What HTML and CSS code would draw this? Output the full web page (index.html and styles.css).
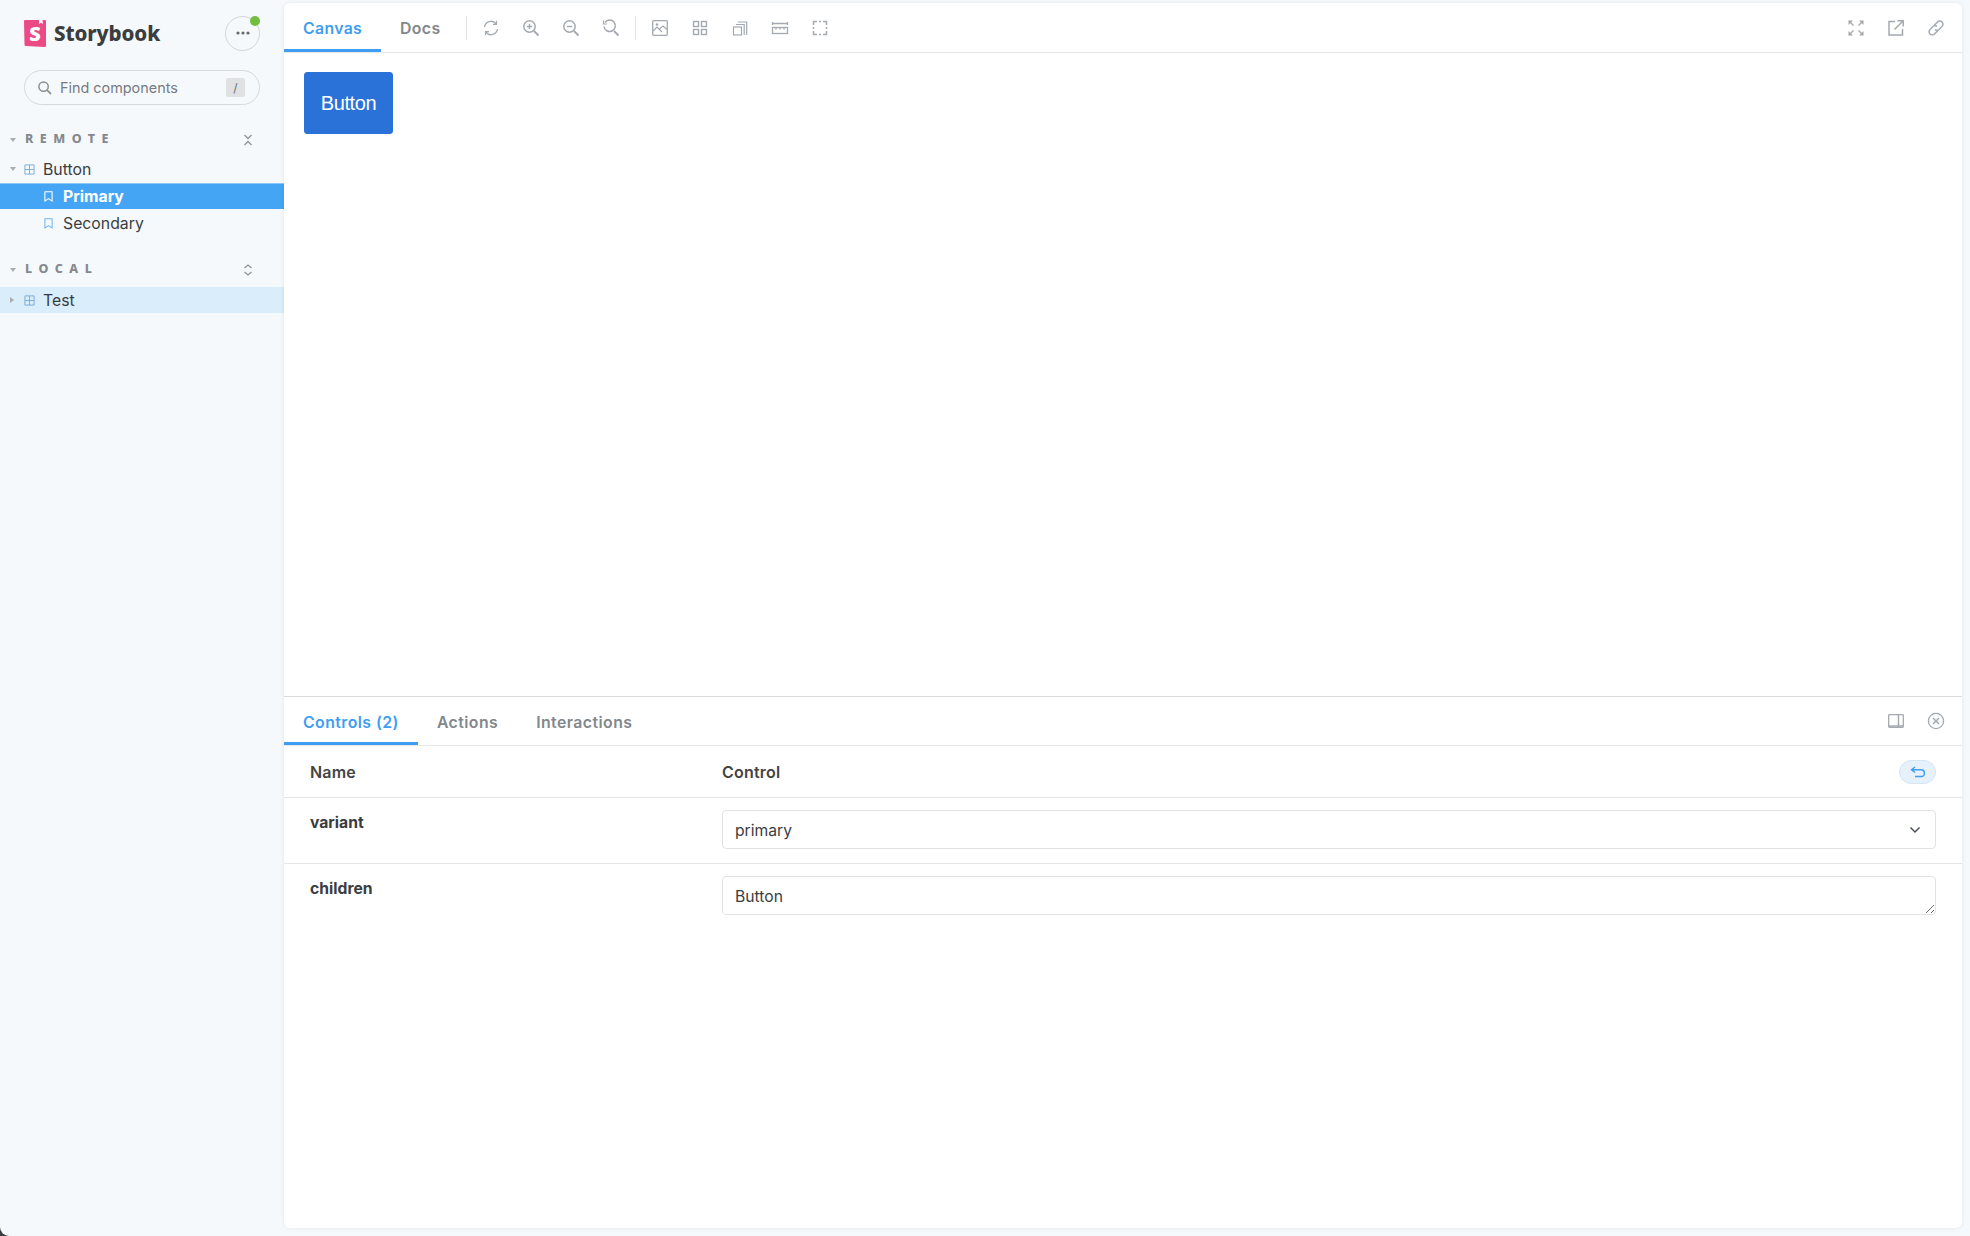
FILE: index.html
```html
<!DOCTYPE html>
<html lang="en">
<head>
<meta charset="utf-8">
<title>Storybook</title>
<link rel="stylesheet" href="styles.css">
</head>
<body>
<svg class="sprite" width="0" height="0" aria-hidden="true">
  <symbol id="grid" viewBox="0 0 12 12"><path d="M1 1h10v10H1zM6 1v10M1 6h10" fill="none" stroke="currentColor" stroke-width="1"/></symbol>
  <symbol id="mark" viewBox="0 0 10 12"><path d="M1 .8h8v10.400L5 8.400l-4 2.800z" fill="none" stroke="currentColor" stroke-width="1.200" stroke-linejoin="round"/></symbol>
</svg>
<div class="shell">
  <aside class="sidebar">
    <header class="brand">
      <div class="logo">
        <svg class="logo-mark" viewBox="0 0 22 27"><path d="M1 0h20a1 1 0 0 1 1 1v25a1 1 0 0 1-1 1L2 26a1.500 1.500 0 0 1-1.500-1.500L0 1a1 1 0 0 1 1-1z" fill="#ec4a84"/><path d="M15 0h3.500l.3 4-1.900-1.300L15 4z" fill="#fff"/><text x="11" y="21" text-anchor="middle" class="logo-s">S</text></svg>
        <span class="logo-text">Storybook</span>
      </div>
      <button class="menu-btn"><svg width="14" height="4" viewBox="0 0 14 4"><circle cx="2" cy="2" r="1.600"/><circle cx="7" cy="2" r="1.600"/><circle cx="12" cy="2" r="1.600"/></svg><span class="dot"></span></button>
    </header>
    <div class="search">
      <svg class="search-icon" viewBox="0 0 16 16"><circle cx="7" cy="7" r="5" fill="none" stroke="currentColor" stroke-width="1.600"/><path d="M11 11l3.500 3.500" stroke="currentColor" stroke-width="1.800" stroke-linecap="round"/></svg>
      <span class="search-label">Find components</span>
      <kbd class="key">/</kbd>
    </div>
    <div class="section-head first">
      <span class="caret-down small"></span><span class="section-title">REMOTE</span>
      <svg class="section-icon" viewBox="0 0 10 12"><path d="M1.500 1L5 4.500 8.500 1M1.500 11L5 7.500l3.500 3.500" fill="none" stroke="currentColor" stroke-width="1.300"/></svg>
    </div>
    <div class="row">
      <span class="caret-down"></span><svg class="ico-grid"><use href="#grid"/></svg><span>Button</span>
    </div>
    <div class="row leaf active"><svg class="ico-mark"><use href="#mark"/></svg><span>Primary</span></div>
    <div class="row leaf"><svg class="ico-mark"><use href="#mark"/></svg><span>Secondary</span></div>
    <div class="section-head">
      <span class="caret-down small"></span><span class="section-title">LOCAL</span>
      <svg class="section-icon" viewBox="0 0 10 12"><path d="M1.500 4L5 1l3.500 3M1.500 8L5 11l3.500-3" fill="none" stroke="currentColor" stroke-width="1.300"/></svg>
    </div>
    <div class="row tinted">
      <span class="caret-right"></span><svg class="ico-grid"><use href="#grid"/></svg><span>Test</span>
    </div>
  </aside>

  <main class="panel">
    <nav class="toolbar">
      <div class="tabs">
        <span class="tab selected">Canvas</span>
        <span class="tab">Docs</span>
      </div>
      <span class="sep"></span>
      <div class="tools">
        <svg class="tool" viewBox="0 0 18 18"><path d="M2.500 8A6.500 6.500 0 0 1 14 4.800M15.500 10A6.500 6.500 0 0 1 4 13.200" fill="none" stroke="currentColor" stroke-width="1.400"/><path d="M14.500 1.800v3.600h-3.600M3.500 16.200v-3.600h3.600" fill="none" stroke="currentColor" stroke-width="1.200"/></svg>
        <svg class="tool" viewBox="0 0 18 18"><circle cx="7.500" cy="7.500" r="5.700" fill="none" stroke="currentColor" stroke-width="1.500"/><path d="M12 12l4.500 4.500" stroke="currentColor" stroke-width="2"/><path d="M4.800 7.500h5.400M7.500 4.800v5.400" stroke="currentColor" stroke-width="1.400"/></svg>
        <svg class="tool" viewBox="0 0 18 18"><circle cx="7.500" cy="7.500" r="5.700" fill="none" stroke="currentColor" stroke-width="1.500"/><path d="M12 12l4.500 4.500" stroke="currentColor" stroke-width="2"/><path d="M4.800 7.500h5.400" stroke="currentColor" stroke-width="1.400"/></svg>
        <svg class="tool" viewBox="0 0 18 18"><path d="M3 3.500A5.700 5.700 0 1 1 2 7.500" fill="none" stroke="currentColor" stroke-width="1.500"/><path d="M12 12l4.500 4.500" stroke="currentColor" stroke-width="2"/><path d="M1.500 1.500v3.500H5" fill="none" stroke="currentColor" stroke-width="1.200"/></svg>
      </div>
      <span class="sep"></span>
      <div class="tools">
        <svg class="tool" viewBox="0 0 18 18"><rect x="1.700" y="1.700" width="14.600" height="14.600" rx=".8" fill="none" stroke="currentColor" stroke-width="1.300"/><path d="M2 12l4-4 5 5M8.500 10l3.500-3 4 3.500" fill="none" stroke="currentColor" stroke-width="1.200"/><circle cx="6" cy="5.500" r="1.200" fill="currentColor"/></svg>
        <svg class="tool" viewBox="0 0 18 18"><g fill="none" stroke="currentColor" stroke-width="1.400"><rect x="2.500" y="2.500" width="5" height="5"/><rect x="10.500" y="2.500" width="5" height="5"/><rect x="2.500" y="10.500" width="5" height="5"/><rect x="10.500" y="10.500" width="5" height="5"/></g></svg>
        <svg class="tool" viewBox="0 0 18 18"><g fill="none" stroke="currentColor" stroke-width="1.200"><rect x="2.500" y="8" width="8" height="8"/><path d="M5 5.500h8.200V16M7 3h8.700v13"/></g></svg>
        <svg class="tool" viewBox="0 0 18 18"><g fill="none" stroke="currentColor" stroke-width="1.300"><rect x="1.500" y="8.500" width="15" height="6"/><path d="M1.500 4.500h15M1.500 3v3M16.500 3v3"/><path d="M5 8.500v2M9 8.500v2M13 8.500v2"/></g></svg>
        <svg class="tool" viewBox="0 0 18 18"><path d="M6 2.500H2.500V6M12 2.500h3.500V6M6 15.500H2.500V12M12 15.500h3.500V12M2.500 8v2M15.500 8v2M8 2.500h2M8 15.500h2" fill="none" stroke="currentColor" stroke-width="1.500"/></svg>
      </div>
      <div class="tools end">
        <svg class="tool" viewBox="0 0 18 18"><g fill="none" stroke="currentColor" stroke-width="1.400"><path d="M2 2l4.500 4.500M16 2l-4.500 4.500M2 16l4.500-4.500M16 16l-4.500-4.500"/></g><path d="M1.500 1.500h4.500L1.500 6zM16.500 1.500H12L16.500 6zM1.500 16.500H6l-4.500-4.500zM16.500 16.500H12l4.500-4.500z" fill="currentColor"/></svg>
        <svg class="tool" viewBox="0 0 18 18"><path d="M8 2.500H2v13.500h13.500V10" fill="none" stroke="currentColor" stroke-width="1.500"/><path d="M7.500 10.500L15.500 2.500M10.500 1.800h5.700v5.700" fill="none" stroke="currentColor" stroke-width="1.500"/></svg>
        <svg class="tool" viewBox="0 0 18 18"><g fill="none" stroke="currentColor" stroke-width="1.500"><path d="M7.500 6l3-3a2.900 2.900 0 0 1 4.500 4.500l-3 3a2.900 2.900 0 0 1-4 0"/><path d="M10.500 12l-3 3A2.900 2.900 0 0 1 3 10.500l3-3a2.900 2.900 0 0 1 4 0"/></g></svg>
      </div>
    </nav>

    <section class="canvas">
      <button class="demo-btn">Button</button>
    </section>

    <section class="addons">
      <nav class="addon-tabs">
        <span class="tab selected">Controls (2)</span>
        <span class="tab">Actions</span>
        <span class="tab">Interactions</span>
        <div class="tools end addon-tools">
          <svg class="tool" viewBox="0 0 18 18"><rect x="1.700" y="2.700" width="14.600" height="12.600" rx=".8" fill="none" stroke="currentColor" stroke-width="1.300"/><path d="M11.500 3v12" stroke="currentColor" stroke-width="1.500"/><path d="M1.700 14h14.600" stroke="currentColor" stroke-width="1.500"/></svg>
          <svg class="tool" viewBox="0 0 18 18"><circle cx="9" cy="9" r="7.600" fill="none" stroke="currentColor" stroke-width="1.300"/><path d="M6 6l6 6M12 6l-6 6" stroke="currentColor" stroke-width="1.500"/></svg>
        </div>
      </nav>
      <div class="controls">
        <div class="ctrl-row head">
          <span class="col-name">Name</span>
          <span class="col-control">Control</span>
          <button class="reset"><svg width="16" height="12" viewBox="0 0 16 12"><path d="M5 1L1.500 3.800 5 6.500M2 3.800h9a3.300 3.300 0 0 1 0 6.700H5" fill="none" stroke="#3f9df2" stroke-width="1.400"/></svg></button>
        </div>
        <div class="ctrl-row">
          <span class="arg-name">variant</span>
          <div class="field select"><span>primary</span>
            <svg width="12" height="8" viewBox="0 0 12 8"><path d="M1.500 1.500L6 6l4.500-4.500" fill="none" stroke="#4a4f55" stroke-width="1.500"/></svg>
          </div>
        </div>
        <div class="ctrl-row plain">
          <span class="arg-name">children</span>
          <div class="field text"><span>Button</span>
            <svg class="grip" width="10" height="10" viewBox="0 0 10 10"><path d="M1 9l8-8M6 9l3-3" stroke="#6b6f74" stroke-width="1"/></svg>
          </div>
        </div>
      </div>
    </section>
  </main>
</div>
</body>
</html>
```

FILE: styles.css
```css
* { box-sizing: border-box; }
html, body { height: 100%; margin: 0; }
body {
  font-family: Inter, "Noto Sans", "Liberation Sans", sans-serif;
  color: #3a3d40;
  background: #3a3d40;
  overflow: hidden;
}
.sprite { position: absolute; }
button { font: inherit; padding: 0; }

.shell { display: flex; height: 1236px; background: #f6f9fc; border-bottom-left-radius: 9px; }

/* sidebar */
.sidebar { width: 284px; flex: none; padding-top: 14px; }
.brand { display: flex; align-items: center; justify-content: space-between; height: 38px; margin: 0 24px; }
.logo { display: flex; align-items: center; gap: 8px; }
.logo-mark { width: 22px; height: 27px; display: block; }
.logo-s { font: 800 20px "Open Sans", sans-serif; fill: #fff; }
.logo-text { font: 800 20.500px/27px "Noto Sans", "Open Sans", sans-serif; color: #3b3d40; letter-spacing: -.1px; }
.menu-btn { position: relative; width: 35px; height: 35px; border-radius: 50%; border: 1px solid #d3d6d9; background: transparent; display: flex; align-items: center; justify-content: center; fill: #666a70; }
.dot { position: absolute; top: -1px; right: -1px; width: 10px; height: 10px; border-radius: 50%; background: #73bd3f; }

.search { display: flex; align-items: center; height: 35px; margin: 18px 24px 0; padding: 0 14px 0 12px; border: 1px solid #d6d9dc; border-radius: 18px; font-size: 14.400px; }
.search-icon { width: 15px; height: 15px; color: #8b9095; flex: none; }
.search-label { margin-left: 8px; flex: 1; color: #777b80; }
.key { width: 19px; height: 19px; background: #dfe1e3; border-radius: 2px; font: 400 12px/19px Inter, sans-serif; text-align: center; color: #6b6f73; }

.section-head { display: flex; align-items: center; height: 27px; margin-top: 20px; padding: 0 31px 0 10px; }
.section-head.first { margin-top: 21px; }
.section-title { font: 800 12.500px/1 "Noto Sans", sans-serif; letter-spacing: 6.500px; color: #85898e; margin-left: 9px; flex: 1; }
.section-icon { width: 10px; height: 12px; color: #8d9297; }

.caret-down { width: 0; height: 0; border: 3.500px solid transparent; border-top: 4px solid #a9adb2; border-bottom: 0; flex: none; }
.caret-right { width: 0; height: 0; border: 3.500px solid transparent; border-left: 4px solid #a9adb2; border-right: 0; flex: none; }
.small { border-width: 4px 3.500px 0; }

.row { display: flex; align-items: center; height: 26px; padding-left: 10px; font-size: 15.800px; margin-top: 1px; }
.section-head + .row { margin-top: 3px; }
.section-head + .row.tinted { margin-top: 4px; }
.ico-grid { width: 11px; height: 11px; margin-left: 8px; margin-right: 8px; color: #75a9d6; flex: none; }
.caret-right + .ico-grid { margin-left: 10px; }
.leaf { padding-left: 44px; }
.ico-mark { width: 9px; height: 11px; color: #75b5ee; margin-right: 10px; flex: none; }
.active { background: #45a5f5; color: #fff; font-weight: 700; border-top: 1px solid #8cc7f7; }
.active .ico-mark { color: #fff; }
.leaf.active + .leaf { margin-top: 1px; }
.tinted { background: #d9edfb; }

/* main */
.panel { flex: 1; margin: 3px 8px 8px 0; background: #fff; border-radius: 6px; box-shadow: 0 0 4px rgba(0,0,0,.08); display: flex; flex-direction: column; min-width: 0; }
.toolbar { display: flex; align-items: center; height: 50px; border-bottom: 1px solid #e4e6e8; flex: none; }
.tabs { display: flex; align-self: stretch; }
.tab { display: flex; align-items: center; padding: 5px 19px 0; font-size: 15.800px; font-weight: 600; color: #82878c; height: 100%; letter-spacing: .35px; border-bottom: 3px solid transparent; }
.tab.selected { color: #3f9df2; border-bottom-color: #3f9df2; }
.tabs .tab:nth-child(2) { padding-right: 26px; }
.sep { width: 1px; height: 24px; background: #e2e4e6; flex: none; }
.tools { display: flex; align-items: center; gap: 22px; }
.sep + .tools { padding-left: 15px; }
.sep + .tools + .sep { margin-left: 15px; }
.tool { width: 18px; height: 18px; color: #a4a9b0; flex: none; display: block; }
.tools.end { margin-left: auto; padding: 0 17px 0 0; }

.canvas { flex: 1; padding: 19px 20px; border-bottom: 1px solid #d8dbde; }
.demo-btn { display: block; width: 89px; height: 62px; background: #2b72d8; border: 1px solid #2b72d8; border-radius: 3px; color: #fff; font: 400 20px "Liberation Sans", Arial, sans-serif; letter-spacing: -.4px; }

.addons { height: 531px; flex: none; display: flex; flex-direction: column; }
.addon-tabs { display: flex; align-items: stretch; height: 49px; border-bottom: 1px solid #e4e6e8; flex: none; }
.addon-tabs .tab { letter-spacing: .45px; height: auto; }
.addon-tools { align-self: center; }
.controls { display: flex; flex-direction: column; }
.ctrl-row { display: grid; grid-template-columns: 412px 1fr; padding: 12px 26px; min-height: 66px; border-bottom: 1px solid #e4e6e8; font-size: 15.700px; }
.ctrl-row.plain { border-bottom: 0; }
.head { position: relative; min-height: 52px; height: 52px; align-items: center; padding: 0 26px; font-size: 16px; font-weight: 600; color: #444; letter-spacing: .2px; }
.arg-name { font-weight: 700; padding-top: 3px; }
.reset { position: absolute; right: 26px; top: 14px; width: 37px; height: 24px; border-radius: 12px; border: 1px solid #d3e6f7; background: #e6f1fb; display: flex; align-items: center; justify-content: center; }
.field { display: flex; align-items: center; justify-content: space-between; height: 39px; padding: 1px 14px 0 12px; border: 1px solid #e0e2e4; border-radius: 4px; position: relative; }
.grip { position: absolute; right: 0; bottom: 0; }
```
